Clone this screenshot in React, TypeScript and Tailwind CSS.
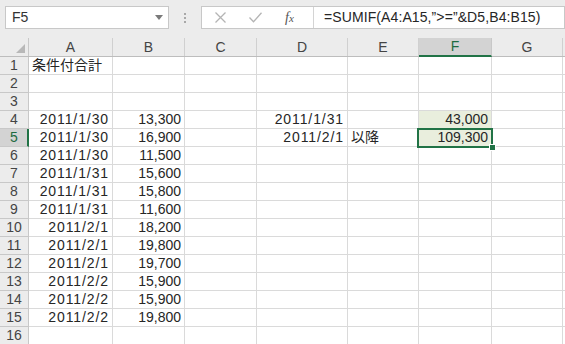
import React from "react";

const COLS = [
  { key: "A", w: "w-[84px]" },
  { key: "B", w: "w-[72px]" },
  { key: "C", w: "w-[72px]" },
  { key: "D", w: "w-[91px]" },
  { key: "E", w: "w-[71px]" },
  { key: "F", w: "w-[73px]" },
  { key: "G", w: "w-[71px]" },
];

type Cell = { t: string; al?: "l" | "r" };
const data: Record<number, Record<string, Cell>> = {
  1: { A: { t: "条件付合計", al: "l" } },
  4: { A: { t: "2011/1/30" }, B: { t: "13,300" }, D: { t: "2011/1/31" }, F: { t: "43,000" } },
  5: { A: { t: "2011/1/30" }, B: { t: "16,900" }, D: { t: "2011/2/1" }, E: { t: "以降", al: "l" }, F: { t: "109,300" } },
  6: { A: { t: "2011/1/30" }, B: { t: "11,500" } },
  7: { A: { t: "2011/1/31" }, B: { t: "15,600" } },
  8: { A: { t: "2011/1/31" }, B: { t: "15,800" } },
  9: { A: { t: "2011/1/31" }, B: { t: "11,600" } },
  10: { A: { t: "2011/2/1" }, B: { t: "18,200" } },
  11: { A: { t: "2011/2/1" }, B: { t: "19,800" } },
  12: { A: { t: "2011/2/1" }, B: { t: "19,700" } },
  13: { A: { t: "2011/2/2" }, B: { t: "15,900" } },
  14: { A: { t: "2011/2/2" }, B: { t: "15,900" } },
  15: { A: { t: "2011/2/2" }, B: { t: "19,800" } },
};

const rows = Array.from({ length: 16 }, (_, i) => i + 1);

export default function App() {
  return (
    <div
      className="relative w-[565px] h-[344px] overflow-hidden bg-white text-[14px] text-[#262626]"
      style={{ fontFamily: '"Liberation Sans", "Noto Sans CJK JP", sans-serif' }}
    >
      {/* Formula bar */}
      <div className="flex h-[38px] items-start bg-[#ececec] pt-[6px] pl-[5px]">
        <div className="relative flex h-[23px] w-[164px] items-center border border-[#c8c8c8] bg-white pl-[6px] text-[#333]">
          F5
          <svg className="absolute right-[5px] top-[8px]" width="8" height="5" viewBox="0 0 8 5">
            <path d="M0 0 H8 L4 5 Z" fill="#7a7a7a" />
          </svg>
        </div>
        <div className="flex h-[23px] w-[32px] flex-col items-center justify-center gap-[2px]">
          <span className="h-[2px] w-[2px] bg-[#a8a8a8]" />
          <span className="h-[2px] w-[2px] bg-[#a8a8a8]" />
          <span className="h-[2px] w-[2px] bg-[#a8a8a8]" />
        </div>
        <div className="flex h-[23px] flex-1 items-center border border-[#c8c8c8] bg-white">
          <div className="flex h-full w-[112px] shrink-0 items-center border-r border-[#d4d4d4]">
            <svg className="ml-[13px]" width="11" height="11" viewBox="0 0 11 11">
              <path d="M0.5 0.5 L10.5 10.5 M10.5 0.5 L0.5 10.5" stroke="#b4b4b4" strokeWidth="1.3" />
            </svg>
            <svg className="ml-[23px]" width="13" height="11" viewBox="0 0 13 11">
              <path d="M0.5 5.5 L4.5 9.8 L12.5 0.8" stroke="#b4b4b4" strokeWidth="1.3" fill="none" />
            </svg>
            <span
              className="ml-[23px] text-[14px] italic text-[#555]"
              style={{ fontFamily: '"Liberation Serif", serif' }}
            >
              f<span className="text-[11px]">x</span>
            </span>
          </div>
          <div className="whitespace-nowrap pl-[10px] tracking-[0.1px] text-[#262626]">
            =SUMIF(A4:A15,”&gt;=”&amp;D5,B4:B15)
          </div>
        </div>
      </div>

      {/* Column headers */}
      <div className="flex h-[19px] border-b border-[#bdbdbd] bg-[#ececec] text-[#444]">
        <div className="relative w-[29px] shrink-0 border-r border-[#c8c8c8]">
          <svg className="absolute right-[3px] bottom-[3px]" width="9" height="9" viewBox="0 0 9 9">
            <path d="M9 0 V9 H0 Z" fill="#b8b8b8" />
          </svg>
        </div>
        {COLS.map((c) =>
          c.key === "F" ? (
            <div
              key={c.key}
              className={`${c.w} relative mb-[-1px] flex shrink-0 items-center justify-center border-r border-[#c8c8c8] border-b-2 border-b-[#217346] bg-[#d3d3d3] text-[#1e6b40]`}
            >
              {c.key}
            </div>
          ) : (
            <div key={c.key} className={`${c.w} flex shrink-0 items-center justify-center border-r border-[#d0d0d0]`}>
              {c.key}
            </div>
          )
        )}
        <div className="flex-1" />
      </div>

      {/* Rows */}
      {rows.map((r) => (
        <div key={r} className="flex h-[18px]">
          <div
            className={
              r === 5
                ? "flex w-[29px] shrink-0 items-center justify-center border-r-2 border-b border-r-[#217346] border-b-[#c8c8c8] bg-[#d3d3d3] pl-[1px] text-[#1e6b40]"
                : "flex w-[29px] shrink-0 items-center justify-center border-r border-b border-[#c8c8c8] bg-[#ececec] text-[#444]"
            }
          >
            {r}
          </div>
          {COLS.map((c) => {
            const cell = data[r]?.[c.key];
            const fill = c.key === "F" && (r === 4 || r === 5) ? "bg-[#e9eedd]" : "";
            return (
              <div
                key={c.key}
                className={`${c.w} ${fill} flex shrink-0 items-center overflow-visible whitespace-nowrap border-r border-b border-[#dadada] ${
                  cell?.al === "l" ? "justify-start pl-[3px]" : "justify-end pr-[3px]"
                }`}
              >
                {cell && (
                  <span className={cell.t.includes("/") ? "tracking-[0.9px]" : ""}>{cell.t}</span>
                )}
              </div>
            );
          })}
          <div className="flex-1 border-b border-[#dadada]" />
        </div>
      ))}

      {/* Selection box on F5 */}
      <div className="pointer-events-none absolute left-[417px] top-[128px] h-[20px] w-[76px] border-2 border-[#217346]">
        <div className="absolute right-[-5px] bottom-[-5px] h-[7px] w-[7px] border border-white bg-[#217346]" />
      </div>
    </div>
  );
}
